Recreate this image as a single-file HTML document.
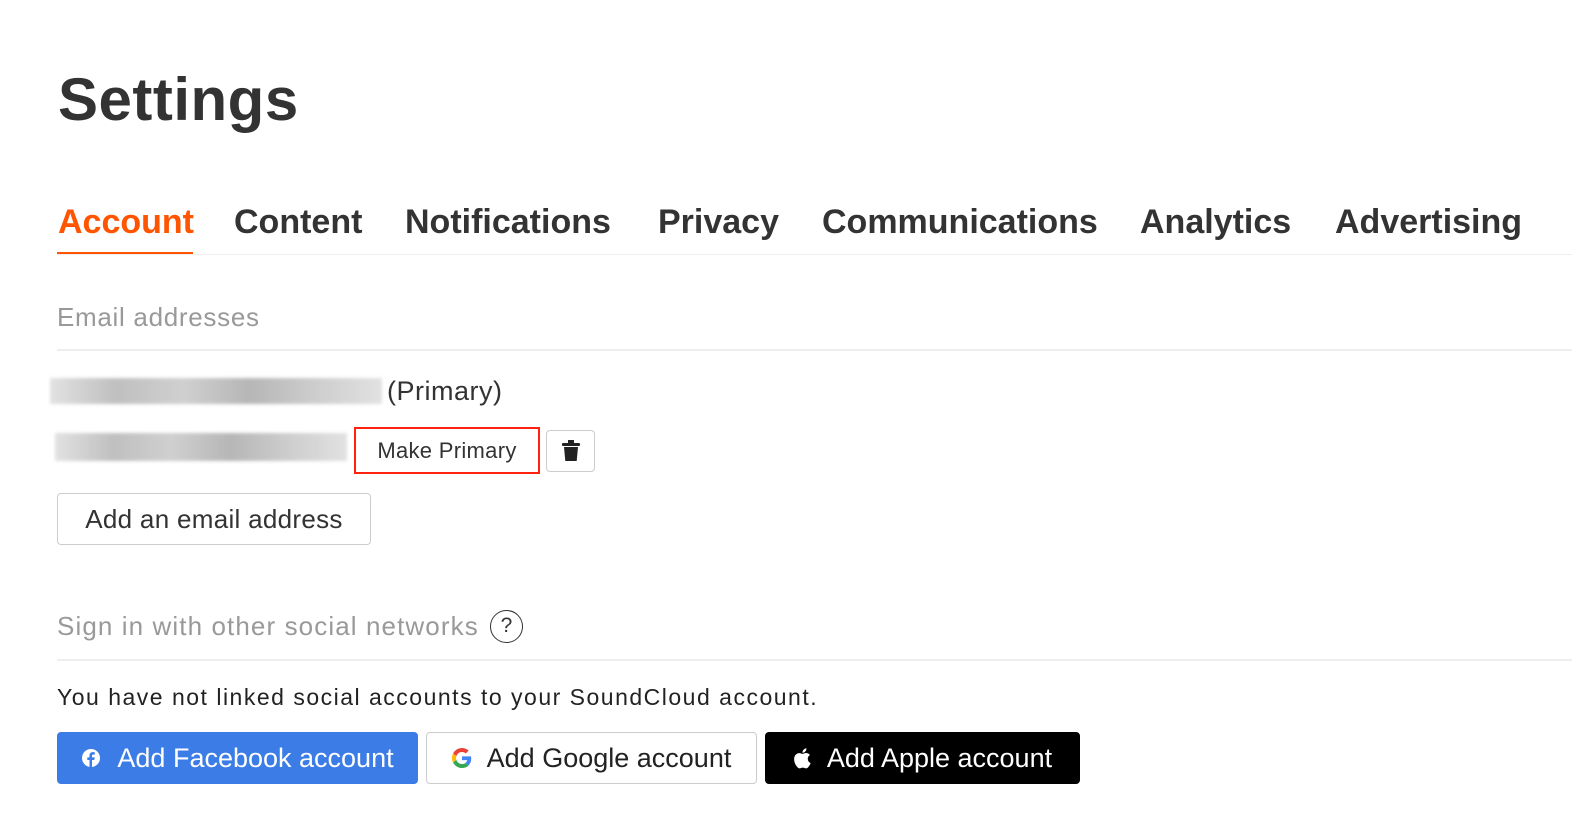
<!DOCTYPE html>
<html><head><meta charset="utf-8"><style>
*{margin:0;padding:0;box-sizing:border-box}
body{width:1572px;height:838px;background:#fff;font-family:"Liberation Sans",sans-serif;color:#333;position:relative;overflow:hidden}
.a{position:absolute;white-space:nowrap}
h1{position:absolute;left:58px;top:65px;font-size:60px;font-weight:bold;color:#333;letter-spacing:0.5px}
.tab{position:absolute;top:203px;font-size:34px;font-weight:bold;color:#333}
.line{position:absolute;left:57px;right:0;height:2px;background:#eee}
.btn{position:absolute;border:1px solid #ccc;border-radius:4px;background:#fff;display:flex;align-items:center;justify-content:center;white-space:nowrap}
.blur{position:absolute;background:linear-gradient(90deg,#ddd,#b5b5b5 20%,#c8c8c8 40%,#aaa 60%,#c5c5c5 80%,#ddd);filter:blur(1.5px);opacity:.85}
</style></head><body>
<h1>Settings</h1>
<div class="tab" style="left:58px;color:#f50">Account</div>
<div class="a" style="left:57px;top:252px;width:136px;height:3px;background:#f50"></div>
<div class="tab" style="left:234px">Content</div>
<div class="tab" style="left:405px">Notifications</div>
<div class="tab" style="left:658px">Privacy</div>
<div class="tab" style="left:822px">Communications</div>
<div class="tab" style="left:1140px">Analytics</div>
<div class="tab" style="left:1335px">Advertising</div>
<div class="line" style="top:254px;height:1px"></div>

<div class="a" style="left:57px;top:302px;font-size:26px;color:#999;letter-spacing:0.7px">Email addresses</div>
<div class="line" style="top:349px"></div>

<div class="blur" style="left:50px;top:378px;width:332px;height:26px"></div>
<div class="a" style="left:387px;top:376px;font-size:27px;color:#333;letter-spacing:0.5px">(Primary)</div>
<div class="blur" style="left:55px;top:433px;width:292px;height:28px"></div>
<div class="btn" style="left:354px;top:427px;width:186px;height:47px;border:2px solid #f21;border-radius:0;font-size:22px;letter-spacing:0.3px">Make Primary</div>
<div class="btn" style="left:546px;top:430px;width:49px;height:42px">
<svg width="18" height="22" viewBox="0 0 18 22"><rect x="0" y="3" width="18" height="3" rx="1" fill="#222"/><rect x="6" y="0" width="6" height="3" fill="#222"/><path d="M2 7h14l-1.3 14H3.3z" fill="#222"/></svg></div>
<div class="btn" style="left:57px;top:493px;width:314px;height:52px;font-size:26px;color:#333;letter-spacing:0.3px">Add an email address</div>

<div class="a" style="left:57px;top:611px;font-size:26px;color:#999;letter-spacing:1.1px">Sign in with other social networks</div>
<div class="a" style="left:490px;top:610px;width:33px;height:33px;border:1.5px solid #333;border-radius:50%;font-size:21px;text-align:center;line-height:30px;color:#333">?</div>
<div class="line" style="top:659px"></div>
<div class="a" style="left:57px;top:684px;font-size:23px;color:#222;letter-spacing:1.5px">You have not linked social accounts to your SoundCloud account.</div>

<div class="btn" style="left:57px;top:732px;width:361px;height:52px;background:#3b7ce6;border-color:#3b7ce6;color:#fff;font-size:27px">
<svg width="20" height="20" viewBox="0 0 20 20" style="margin-right:16px"><circle cx="10" cy="10" r="9" fill="#fff"/><path d="M11 19v-7h2.3l.4-2.6H11V7.8c0-.8.3-1.3 1.3-1.3h1.5V4.2c-.3 0-1.1-.1-2-.1-2 0-3.3 1.200-3.300 3.400v1.900H6.300V12h2.200v7z" fill="#3b7ce6"/></svg>Add Facebook account</div>
<div class="btn" style="left:426px;top:732px;width:331px;height:52px;font-size:27px;color:#222">
<svg width="20" height="20" viewBox="0 0 48 48" style="margin-right:15px"><path fill="#EA4335" d="M24 9.5c3.5 0 6.6 1.2 9.1 3.6l6.8-6.8C35.8 2.4 30.3 0 24 0 14.6 0 6.6 5.4 2.6 13.2l7.9 6.2C12.4 13.7 17.7 9.5 24 9.5z"/><path fill="#4285F4" d="M46.1 24.5c0-1.6-.1-3.1-.4-4.5H24v9h12.4c-.5 2.9-2.2 5.3-4.6 7l7.7 6c4.5-4.2 6.6-10.3 6.6-17.5z"/><path fill="#FBBC05" d="M10.5 28.6c-.5-1.4-.8-3-.8-4.6s.3-3.2.8-4.6l-7.9-6.2C.9 16.5 0 20.1 0 24s.9 7.5 2.6 10.8z"/><path fill="#34A853" d="M24 48c6.5 0 11.9-2.1 15.9-5.8l-7.7-6c-2.2 1.5-5 2.3-8.2 2.3-6.3 0-11.6-4.2-13.5-10l-7.9 6.2C6.6 42.6 14.6 48 24 48z"/></svg>Add Google account</div>
<div class="btn" style="left:765px;top:732px;width:315px;height:52px;background:#000;border-color:#000;color:#fff;font-size:27px">
<svg width="18" height="22" viewBox="0 0 18 22" style="margin-right:16px"><path d="M14.8 11.7c0-2.4 2-3.6 2.1-3.7-1.2-1.7-3-1.9-3.6-2-1.5-.2-3 .9-3.8.9s-2-.9-3.3-.8C4.5 6.1 2.9 7.1 2 8.6c-1.8 3.1-.5 7.7 1.3 10.2.9 1.2 1.9 2.6 3.2 2.6 1.3-.1 1.8-.8 3.3-.8s2 .8 3.3.8c1.4 0 2.3-1.3 3.1-2.5 1-1.4 1.4-2.8 1.4-2.9-.1 0-2.8-1-2.8-4.3zM12.4 4.4c.7-.8 1.2-2 1-3.2-1 .1-2.2.7-2.9 1.5-.6.7-1.2 1.9-1 3.1 1.1.1 2.2-.6 2.9-1.4z" fill="#fff"/></svg>Add Apple account</div>
</body></html>
